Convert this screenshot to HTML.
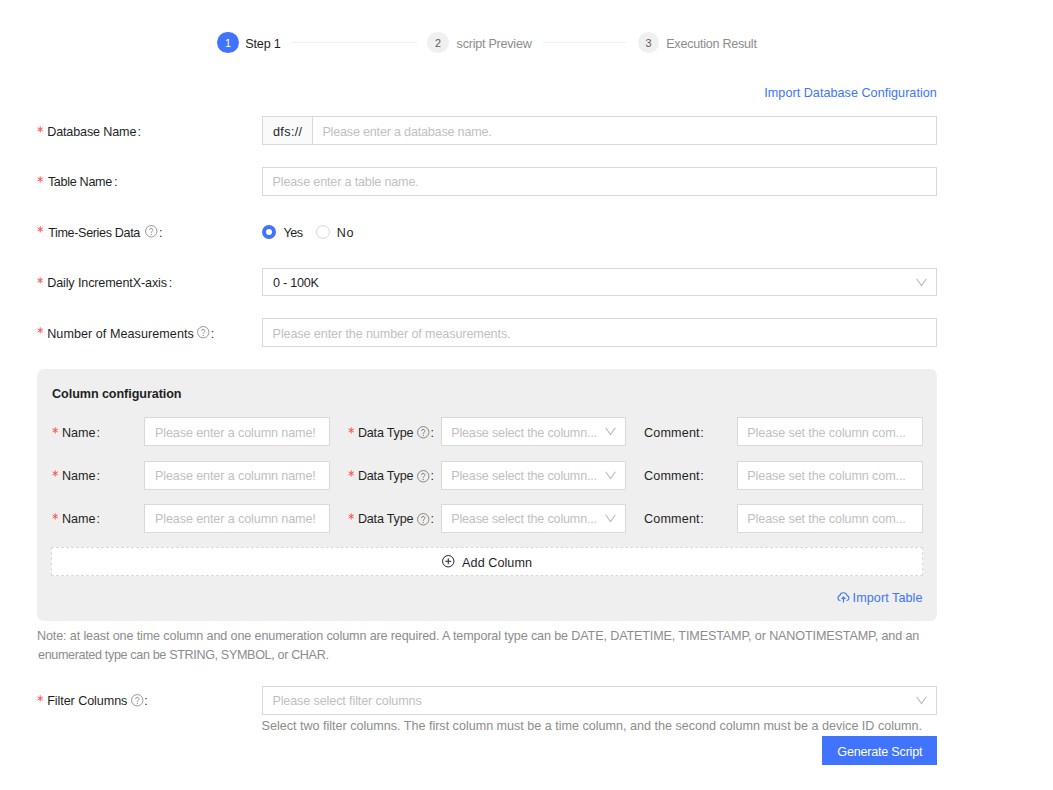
<!DOCTYPE html>
<html>
<head>
<meta charset="utf-8">
<style>
html,body{margin:0;padding:0;background:#fff;}
body{width:1053px;height:790px;position:relative;overflow:hidden;font-family:"Liberation Sans",sans-serif;font-size:12.6px;color:#1f1f1f;}
.a{position:absolute;}
.t{position:absolute;line-height:20px;white-space:nowrap;}
.box{position:absolute;box-sizing:border-box;border:1px solid #d9d9d9;background:#fff;}
.ph{color:#bfbfbf;}
.gray{color:#8c8c8c;}
.blue{color:#4074fe;}
.circ{position:absolute;border-radius:50%;box-sizing:border-box;text-align:center;}
.line{position:absolute;height:1px;background:#f0f0f0;}
svg{position:absolute;overflow:visible;}
</style>
</head>
<body>
<div class="circ" style="left:217.2px;top:31.6px;width:21.6px;height:21.6px;background:#4074fe;color:#fff;line-height:22.6px;font-size:10.8px;">1</div>
<div class="t " style="left:245.2px;top:33.6px;letter-spacing:-0.15px;">Step 1</div>
<div class="line" style="left:291px;top:42px;width:126px;"></div>
<div class="circ" style="left:427.2px;top:31.6px;width:21.6px;height:21.6px;background:#f0f0f0;color:#595959;line-height:22.6px;font-size:10.8px;">2</div>
<div class="t gray" style="left:456.6px;top:33.6px;letter-spacing:-0.246px;">script Preview</div>
<div class="line" style="left:543px;top:42px;width:84px;"></div>
<div class="circ" style="left:637.6px;top:31.6px;width:21.6px;height:21.6px;background:#f0f0f0;color:#595959;line-height:22.6px;font-size:10.8px;">3</div>
<div class="t gray" style="left:666.2px;top:33.6px;letter-spacing:-0.253px;">Execution Result</div>
<div class="t blue" style="left:764.3px;top:82.6px;letter-spacing:0.036px;">Import Database Configuration</div>
<svg style="left:37.3px;top:125.79999999999998px;" width="6.4" height="6.8" viewBox="-3.2 -3.4 6.4 6.8"><g stroke="#ff4d4f" stroke-width="1.0" stroke-linecap="round"><path d="M0 -2.7V2.7"/><path d="M-2.25 -1.35L2.25 1.35"/><path d="M-2.25 1.35L2.25 -1.35"/></g></svg>
<div class="t " style="left:47.2px;top:122px;letter-spacing:-0.15px;">Database Name</div>
<div class="t" style="left:137.4px;top:122px;">:</div>
<div class="box" style="left:262px;top:116px;width:675px;height:29px;"></div>
<div class="box" style="left:262px;top:116px;width:51px;height:29px;background:#fafafa;"></div>
<div class="t " style="left:273.0px;top:122px;letter-spacing:0.36px;">dfs://</div>
<div class="t ph" style="left:322.4px;top:122px;letter-spacing:-0.2px;">Please enter a database name.</div>
<svg style="left:37.3px;top:175.79999999999998px;" width="6.4" height="6.8" viewBox="-3.2 -3.4 6.4 6.8"><g stroke="#ff4d4f" stroke-width="1.0" stroke-linecap="round"><path d="M0 -2.7V2.7"/><path d="M-2.25 -1.35L2.25 1.35"/><path d="M-2.25 1.35L2.25 -1.35"/></g></svg>
<div class="t " style="left:47.9px;top:172px;letter-spacing:-0.312px;">Table Name</div>
<div class="t" style="left:114.10000000000001px;top:172px;">:</div>
<div class="box" style="left:262px;top:167px;width:675px;height:29px;"></div>
<div class="t ph" style="left:272.6px;top:172px;letter-spacing:-0.176px;">Please enter a table name.</div>
<svg style="left:37.3px;top:226.39999999999998px;" width="6.4" height="6.8" viewBox="-3.2 -3.4 6.4 6.8"><g stroke="#ff4d4f" stroke-width="1.0" stroke-linecap="round"><path d="M0 -2.7V2.7"/><path d="M-2.25 -1.35L2.25 1.35"/><path d="M-2.25 1.35L2.25 -1.35"/></g></svg>
<div class="t " style="left:48.2px;top:222.6px;letter-spacing:-0.361px;">Time-Series Data</div>
<div class="t" style="left:158.9px;top:222.6px;">:</div>
<svg style="left:145px;top:225px;" width="12.5" height="12.5" viewBox="0 0 12.5 12.5"><circle cx="6.25" cy="6.25" r="5.7" fill="none" stroke="#8c8c8c" stroke-width="0.9"/><path d="M4.6 5a1.65 1.65 0 1 1 2.4 1.45c-.5.25-.75.55-.75 1.05v.45" fill="none" stroke="#8c8c8c" stroke-width="0.9"/><circle cx="6.25" cy="9.4" r=".55" fill="#8c8c8c"/></svg>
<div class="circ" style="left:262px;top:224.5px;width:14px;height:14px;border:4.5px solid #4074fe;background:#fff;"></div>
<div class="t " style="left:283.6px;top:222.6px;letter-spacing:-0.6px;">Yes</div>
<div class="circ" style="left:316px;top:224.5px;width:14px;height:14px;border:1px solid #d9d9d9;background:#fff;"></div>
<div class="t " style="left:336.7px;top:222.6px;letter-spacing:0.6px;">No</div>
<svg style="left:37.3px;top:276.8px;" width="6.4" height="6.8" viewBox="-3.2 -3.4 6.4 6.8"><g stroke="#ff4d4f" stroke-width="1.0" stroke-linecap="round"><path d="M0 -2.7V2.7"/><path d="M-2.25 -1.35L2.25 1.35"/><path d="M-2.25 1.35L2.25 -1.35"/></g></svg>
<div class="t " style="left:47.2px;top:273px;letter-spacing:-0.13px;">Daily IncrementX-axis</div>
<div class="t" style="left:168.70000000000002px;top:273px;">:</div>
<div class="box" style="left:262px;top:268px;width:675px;height:28px;"></div>
<div class="t " style="left:273.0px;top:273px;letter-spacing:-0.229px;">0 - 100K</div>
<svg style="left:916px;top:279px;" width="11" height="8" viewBox="0 0 11 8"><path d="M0.6 -0.3L5.5 6.6L10.4 -0.3" fill="none" stroke="#b8b8b8" stroke-width="1.05"/></svg>
<svg style="left:37.3px;top:327.40000000000003px;" width="6.4" height="6.8" viewBox="-3.2 -3.4 6.4 6.8"><g stroke="#ff4d4f" stroke-width="1.0" stroke-linecap="round"><path d="M0 -2.7V2.7"/><path d="M-2.25 -1.35L2.25 1.35"/><path d="M-2.25 1.35L2.25 -1.35"/></g></svg>
<div class="t " style="left:47.2px;top:323.6px;letter-spacing:0.048px;">Number of Measurements</div>
<div class="t" style="left:210.8px;top:323.6px;">:</div>
<svg style="left:197px;top:326px;" width="12.5" height="12.5" viewBox="0 0 12.5 12.5"><circle cx="6.25" cy="6.25" r="5.7" fill="none" stroke="#8c8c8c" stroke-width="0.9"/><path d="M4.6 5a1.65 1.65 0 1 1 2.4 1.45c-.5.25-.75.55-.75 1.05v.45" fill="none" stroke="#8c8c8c" stroke-width="0.9"/><circle cx="6.25" cy="9.4" r=".55" fill="#8c8c8c"/></svg>
<div class="box" style="left:262px;top:318px;width:675px;height:29px;"></div>
<div class="t ph" style="left:272.6px;top:323.6px;letter-spacing:-0.108px;">Please enter the number of measurements.</div>
<div class="a" style="left:37px;top:368.5px;width:900px;height:252.5px;background:#efefef;border-radius:7px;"></div>
<div class="t " style="left:52.1px;top:383.7px;letter-spacing:-0.074px;font-weight:bold;">Column configuration</div>
<svg style="left:52.099999999999994px;top:426.8px;" width="6.4" height="6.8" viewBox="-3.2 -3.4 6.4 6.8"><g stroke="#ff4d4f" stroke-width="1.0" stroke-linecap="round"><path d="M0 -2.7V2.7"/><path d="M-2.25 -1.35L2.25 1.35"/><path d="M-2.25 1.35L2.25 -1.35"/></g></svg>
<div class="t " style="left:62.0px;top:423px;letter-spacing:0.0px;">Name</div>
<div class="t" style="left:96.4px;top:423px;">:</div>
<div class="box" style="left:144px;top:417px;width:186px;height:29px;"></div>
<div class="t ph" style="left:155.0px;top:423px;letter-spacing:-0.115px;">Please enter a column name!</div>
<svg style="left:348.1px;top:426.8px;" width="6.4" height="6.8" viewBox="-3.2 -3.4 6.4 6.8"><g stroke="#ff4d4f" stroke-width="1.0" stroke-linecap="round"><path d="M0 -2.7V2.7"/><path d="M-2.25 -1.35L2.25 1.35"/><path d="M-2.25 1.35L2.25 -1.35"/></g></svg>
<div class="t " style="left:357.9px;top:423px;letter-spacing:-0.198px;">Data Type</div>
<svg style="left:417px;top:425.5px;" width="12.5" height="12.5" viewBox="0 0 12.5 12.5"><circle cx="6.25" cy="6.25" r="5.7" fill="none" stroke="#7a7a7a" stroke-width="0.9"/><path d="M4.6 5a1.65 1.65 0 1 1 2.4 1.45c-.5.25-.75.55-.75 1.05v.45" fill="none" stroke="#7a7a7a" stroke-width="0.9"/><circle cx="6.25" cy="9.4" r=".55" fill="#7a7a7a"/></svg>
<div class="t" style="left:430.5px;top:423px;">:</div>
<div class="box" style="left:441px;top:417px;width:185px;height:29px;"></div>
<div class="t ph" style="left:451.2px;top:423px;letter-spacing:-0.176px;">Please select the column...</div>
<svg style="left:605px;top:428px;" width="11" height="8" viewBox="0 0 11 8"><path d="M0.6 -0.3L5.5 6.6L10.4 -0.3" fill="none" stroke="#b8b8b8" stroke-width="1.05"/></svg>
<div class="t " style="left:644.0px;top:423px;letter-spacing:0.166px;">Comment</div>
<div class="t" style="left:700.3px;top:423px;">:</div>
<div class="box" style="left:737px;top:417px;width:186px;height:29px;"></div>
<div class="t ph" style="left:747.3px;top:423px;letter-spacing:-0.118px;">Please set the column com...</div>
<svg style="left:52.099999999999994px;top:469.8px;" width="6.4" height="6.8" viewBox="-3.2 -3.4 6.4 6.8"><g stroke="#ff4d4f" stroke-width="1.0" stroke-linecap="round"><path d="M0 -2.7V2.7"/><path d="M-2.25 -1.35L2.25 1.35"/><path d="M-2.25 1.35L2.25 -1.35"/></g></svg>
<div class="t " style="left:62.0px;top:466px;letter-spacing:0.0px;">Name</div>
<div class="t" style="left:96.4px;top:466px;">:</div>
<div class="box" style="left:144px;top:461px;width:186px;height:29px;"></div>
<div class="t ph" style="left:155.0px;top:466px;letter-spacing:-0.115px;">Please enter a column name!</div>
<svg style="left:348.1px;top:469.8px;" width="6.4" height="6.8" viewBox="-3.2 -3.4 6.4 6.8"><g stroke="#ff4d4f" stroke-width="1.0" stroke-linecap="round"><path d="M0 -2.7V2.7"/><path d="M-2.25 -1.35L2.25 1.35"/><path d="M-2.25 1.35L2.25 -1.35"/></g></svg>
<div class="t " style="left:357.9px;top:466px;letter-spacing:-0.198px;">Data Type</div>
<svg style="left:417px;top:469.5px;" width="12.5" height="12.5" viewBox="0 0 12.5 12.5"><circle cx="6.25" cy="6.25" r="5.7" fill="none" stroke="#7a7a7a" stroke-width="0.9"/><path d="M4.6 5a1.65 1.65 0 1 1 2.4 1.45c-.5.25-.75.55-.75 1.05v.45" fill="none" stroke="#7a7a7a" stroke-width="0.9"/><circle cx="6.25" cy="9.4" r=".55" fill="#7a7a7a"/></svg>
<div class="t" style="left:430.5px;top:466px;">:</div>
<div class="box" style="left:441px;top:461px;width:185px;height:29px;"></div>
<div class="t ph" style="left:451.2px;top:466px;letter-spacing:-0.176px;">Please select the column...</div>
<svg style="left:605px;top:472px;" width="11" height="8" viewBox="0 0 11 8"><path d="M0.6 -0.3L5.5 6.6L10.4 -0.3" fill="none" stroke="#b8b8b8" stroke-width="1.05"/></svg>
<div class="t " style="left:644.0px;top:466px;letter-spacing:0.166px;">Comment</div>
<div class="t" style="left:700.3px;top:466px;">:</div>
<div class="box" style="left:737px;top:461px;width:186px;height:29px;"></div>
<div class="t ph" style="left:747.3px;top:466px;letter-spacing:-0.118px;">Please set the column com...</div>
<svg style="left:52.099999999999994px;top:512.8000000000001px;" width="6.4" height="6.8" viewBox="-3.2 -3.4 6.4 6.8"><g stroke="#ff4d4f" stroke-width="1.0" stroke-linecap="round"><path d="M0 -2.7V2.7"/><path d="M-2.25 -1.35L2.25 1.35"/><path d="M-2.25 1.35L2.25 -1.35"/></g></svg>
<div class="t " style="left:62.0px;top:509px;letter-spacing:0.0px;">Name</div>
<div class="t" style="left:96.4px;top:509px;">:</div>
<div class="box" style="left:144px;top:504px;width:186px;height:29px;"></div>
<div class="t ph" style="left:155.0px;top:509px;letter-spacing:-0.115px;">Please enter a column name!</div>
<svg style="left:348.1px;top:512.8000000000001px;" width="6.4" height="6.8" viewBox="-3.2 -3.4 6.4 6.8"><g stroke="#ff4d4f" stroke-width="1.0" stroke-linecap="round"><path d="M0 -2.7V2.7"/><path d="M-2.25 -1.35L2.25 1.35"/><path d="M-2.25 1.35L2.25 -1.35"/></g></svg>
<div class="t " style="left:357.9px;top:509px;letter-spacing:-0.198px;">Data Type</div>
<svg style="left:417px;top:512.5px;" width="12.5" height="12.5" viewBox="0 0 12.5 12.5"><circle cx="6.25" cy="6.25" r="5.7" fill="none" stroke="#7a7a7a" stroke-width="0.9"/><path d="M4.6 5a1.65 1.65 0 1 1 2.4 1.45c-.5.25-.75.55-.75 1.05v.45" fill="none" stroke="#7a7a7a" stroke-width="0.9"/><circle cx="6.25" cy="9.4" r=".55" fill="#7a7a7a"/></svg>
<div class="t" style="left:430.5px;top:509px;">:</div>
<div class="box" style="left:441px;top:504px;width:185px;height:29px;"></div>
<div class="t ph" style="left:451.2px;top:509px;letter-spacing:-0.176px;">Please select the column...</div>
<svg style="left:605px;top:515px;" width="11" height="8" viewBox="0 0 11 8"><path d="M0.6 -0.3L5.5 6.6L10.4 -0.3" fill="none" stroke="#b8b8b8" stroke-width="1.05"/></svg>
<div class="t " style="left:644.0px;top:509px;letter-spacing:0.166px;">Comment</div>
<div class="t" style="left:700.3px;top:509px;">:</div>
<div class="box" style="left:737px;top:504px;width:186px;height:29px;"></div>
<div class="t ph" style="left:747.3px;top:509px;letter-spacing:-0.118px;">Please set the column com...</div>
<div class="a" style="left:51px;top:547px;width:872px;height:29px;box-sizing:border-box;border:1px dashed #d9d9d9;background:#fff;"></div>
<svg style="left:442px;top:555px;" width="13" height="13" viewBox="0 0 13 13"><circle cx="6.25" cy="6.25" r="5.7" fill="none" stroke="#1f1f1f" stroke-width="1"/><path d="M6.25 3.3v5.9M3.3 6.25h5.9" stroke="#1f1f1f" stroke-width="1"/></svg>
<div class="t " style="left:462.1px;top:553px;letter-spacing:0.065px;">Add Column</div>
<svg style="left:837px;top:592px;" width="13" height="11" viewBox="0 0 13 11"><path d="M3.5 8.5H3A2.5 2.5 0 0 1 2.8 3.6 3.7 3.7 0 0 1 10 3.6 2.5 2.5 0 0 1 10 8.5H9.5" fill="none" stroke="#4074fe" stroke-width="1.1"/><path d="M6.5 10.5V5.2M4.6 7l1.9-1.9L8.4 7" fill="none" stroke="#4074fe" stroke-width="1.1"/></svg>
<div class="t blue" style="left:852.6px;top:587.6px;letter-spacing:0.074px;">Import Table</div>
<div class="t gray" style="left:37.0px;top:626.1px;letter-spacing:-0.131px;">Note: at least one time column and one enumeration column are required. A temporal type can be DATE, DATETIME, TIMESTAMP, or NANOTIMESTAMP, and an</div>
<div class="t gray" style="left:38.0px;top:645.1px;letter-spacing:-0.356px;">enumerated type can be STRING, SYMBOL, or CHAR.</div>
<svg style="left:37.3px;top:694.8000000000001px;" width="6.4" height="6.8" viewBox="-3.2 -3.4 6.4 6.8"><g stroke="#ff4d4f" stroke-width="1.0" stroke-linecap="round"><path d="M0 -2.7V2.7"/><path d="M-2.25 -1.35L2.25 1.35"/><path d="M-2.25 1.35L2.25 -1.35"/></g></svg>
<div class="t " style="left:47.2px;top:691px;letter-spacing:-0.077px;">Filter Columns</div>
<div class="t" style="left:144.3px;top:691px;">:</div>
<svg style="left:131.2px;top:694px;" width="12.5" height="12.5" viewBox="0 0 12.5 12.5"><circle cx="6.25" cy="6.25" r="5.7" fill="none" stroke="#8c8c8c" stroke-width="0.9"/><path d="M4.6 5a1.65 1.65 0 1 1 2.4 1.45c-.5.25-.75.55-.75 1.05v.45" fill="none" stroke="#8c8c8c" stroke-width="0.9"/><circle cx="6.25" cy="9.4" r=".55" fill="#8c8c8c"/></svg>
<div class="box" style="left:262px;top:686px;width:675px;height:29px;"></div>
<div class="t ph" style="left:272.4px;top:691px;letter-spacing:-0.12px;">Please select filter columns</div>
<svg style="left:916px;top:697px;" width="11" height="8" viewBox="0 0 11 8"><path d="M0.6 -0.3L5.5 6.6L10.4 -0.3" fill="none" stroke="#b8b8b8" stroke-width="1.05"/></svg>
<div class="t gray" style="left:261.6px;top:716.1px;letter-spacing:-0.014px;">Select two filter columns. The first column must be a time column, and the second column must be a device ID column.</div>
<div class="a" style="left:822px;top:736px;width:115px;height:29px;background:#4074fe;"></div>
<div class="t " style="left:837.3px;top:742.1px;letter-spacing:-0.215px;color:#fff;">Generate Script</div>
</body>
</html>
